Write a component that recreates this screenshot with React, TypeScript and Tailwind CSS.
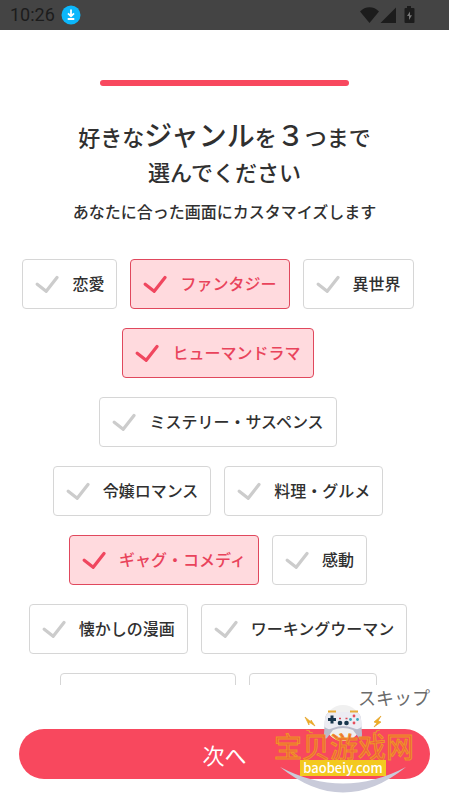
import { useState } from "react";

type Genre = { id: string; label: string; width?: string };

const genres: Genre[] = [
  { id: "love", label: "恋愛" },
  { id: "fantasy", label: "ファンタジー" },
  { id: "isekai", label: "異世界" },
  { id: "drama", label: "ヒューマンドラマ" },
  { id: "mystery", label: "ミステリー・サスペンス" },
  { id: "lady", label: "令嬢ロマンス" },
  { id: "gourmet", label: "料理・グルメ" },
  { id: "comedy", label: "ギャグ・コメディ" },
  { id: "moving", label: "感動" },
  { id: "classic", label: "懐かしの漫画" },
  { id: "working", label: "ワーキングウーマン" },
  { id: "more-1", label: "", width: "w-44" },
  { id: "more-2", label: "", width: "w-32" },
];

function StatusBar() {
  return (
    <header className="flex h-[30px] shrink-0 items-center justify-between bg-[#444444] pl-2.5 pr-[33px] text-[#1c1c1c]">
      <div className="flex items-center gap-1.5">
        <span className="font-[Roboto,sans-serif] text-lg leading-[30px]">10:26</span>
        <svg viewBox="0 0 20 20" className="size-5" aria-hidden="true">
          <circle cx="10" cy="10" r="9.5" fill="#0cb7fb" />
          <path d="M10 4.5v6.5M7 8.3l3 3 3-3M6.7 14h6.6" fill="none" stroke="#fff" strokeWidth="1.8" />
        </svg>
      </div>
      <svg viewBox="0 0 56 18" className="h-[18px] w-14" fill="currentColor" aria-hidden="true">
        <path d="M0 5.5C5-.2 14-.2 19 5.5L9.500 17z" />
        <path d="M36 1.500V17H20.500z" />
        <path d="M47 0h4v2h2.500q1 0 1 1v13q0 1-1 1h-8q-1 0-1-1V3q0-1 1-1H47z" />
        <path d="M50 5.500l-3 4.500h2v4l3-4.800h-2z" fill="#777" />
      </svg>
    </header>
  );
}

function GenreChip({ genre, checked, onToggle }: { genre: Genre; checked: boolean; onToggle: () => void }) {
  return (
    <label
      className={`relative mr-[13px] flex h-[50px] cursor-pointer items-center rounded border px-3 text-base font-medium ${genre.width ?? ""} ${
        checked ? "border-[#e0485d] bg-[#ffdade] text-[#e9435b]" : "border-[#d6d6d6] bg-white text-[#303030]"
      }`}
    >
      <input type="checkbox" className="sr-only" checked={checked} onChange={onToggle} aria-label={genre.label || "ジャンル"} />
      <svg viewBox="0 0 24 18" className={`mr-[13px] h-[18px] w-6 shrink-0 ${checked ? "text-[#f0475f]" : "text-[#cccccc]"}`} aria-hidden="true">
        <path d="M2.200 9.300l9 7L22 2.500" fill="none" stroke="currentColor" strokeWidth="3.200" strokeLinecap="round" />
      </svg>
      <span className="whitespace-nowrap pb-[3px]">{genre.label}</span>
    </label>
  );
}

function Watermark() {
  return (
    <div className="pointer-events-none absolute bottom-1 right-[31px] h-[94px] w-36">
      <svg viewBox="0 0 144 94" className="absolute inset-0 size-full" aria-hidden="true">
        <circle cx="69" cy="23" r="18" fill="#f0f0f0" />
        <path d="M6 67Q69 118 132 67Q69 100 6 67z" fill="#c9cbda" />
        <path d="M57 12q-5 0-6 7l-1 15q0 6 3 4l6-8q10-4 20 0l6 8q3 2 3-4l-1-15q-1-7-6-7z" fill="#b9bbcb" />
        <path d="M57 12q-5 0-6 7l-1 7q3 5 9 2 10-4 20 0 6 3 9-2l-1-7q-1-7-6-7z" fill="#ececf3" />
        <path d="M54 11.500h8M76 11.500h8" stroke="#e8ad39" strokeWidth="1.800" />
        <path d="M58 15.500v8M54 19.500h8" stroke="#18364d" strokeWidth="3" />
        <g fill="#18364d"><circle cx="66" cy="23" r="2.300" /><circle cx="72.500" cy="23" r="2.300" /></g>
        <path d="M65 18.500h2M71.500 18.500h2" stroke="#d84655" strokeWidth="1.500" />
        <g fill="#e64c5b"><circle cx="80" cy="16" r="1.400" /><circle cx="80" cy="23" r="1.400" /></g>
        <g fill="#38a8ba"><circle cx="76.500" cy="19.500" r="1.400" /><circle cx="83.500" cy="19.500" r="1.400" /></g>
        <path d="M31 17l6 5v-2l4 6-6-4v3zM107 16l-7 6 3 1-3 4 7-5-3-1zM32 30l4 1-1 1 4 1M106 30l-4 1 1 1-4 1" fill="#f0ae20" stroke="#e4a42c" strokeWidth=".7" />
      </svg>
      <div className="relative flex flex-col items-start pt-8">
        <span className="whitespace-nowrap font-['Noto_Sans_CJK_SC',sans-serif] text-[28px] leading-7 text-[#ee5f3c] [-webkit-text-stroke:1px_#ef9428]">
          宝贝游戏网
        </span>
        <span className="ml-[26px] flex h-4 w-[86px] items-center justify-center bg-[#f3c91f] font-['Noto_Sans_CJK_SC',sans-serif] text-[13px] font-medium leading-4 text-white">
          baobeiy.com
        </span>
      </div>
    </div>
  );
}

export default function App() {
  const [selected, setSelected] = useState<string[]>(["fantasy", "drama", "comedy"]);

  const toggle = (id: string) =>
    setSelected((current) =>
      current.includes(id) ? current.filter((item) => item !== id) : current.length < 3 ? [...current, id] : current,
    );

  return (
    <div className="relative flex h-screen flex-col overflow-hidden bg-white font-['Noto_Sans_CJK_JP',sans-serif] text-[#303030]">
      <StatusBar />
      <main className="flex min-h-0 flex-1 flex-col">
        <div className="mx-[100px] mt-[50px] h-1.5 shrink-0 rounded-sm bg-[#f8485e]" />
        <h1 className="mt-[31px] text-center text-[22px] font-medium leading-[35px]">
          好きな<span className="text-[28px]">ジャンル</span>を<span className="text-[28px]">３</span>つまで
          <br />
          選んでください
        </h1>
        <p className="mt-2.5 text-center text-base font-medium leading-6">あなたに合った画面にカスタマイズします</p>
        <div className="mt-9 flex min-h-0 flex-1 flex-wrap content-start justify-center gap-y-[19px] overflow-hidden px-4">
          {genres.map((genre) => (
            <GenreChip
              key={genre.id}
              genre={genre}
              checked={selected.includes(genre.id)}
              onToggle={() => toggle(genre.id)}
            />
          ))}
        </div>
      </main>
      <footer className="flex shrink-0 flex-col px-[19px] pb-[19px]">
        <button type="button" className="self-end text-lg leading-6 text-[#6b6b6b]">
          スキップ
        </button>
        <button type="button" className="mt-5 h-[50px] rounded-full bg-[#f8485e] text-[22px] text-white">
          次へ
        </button>
      </footer>
      <Watermark />
    </div>
  );
}
